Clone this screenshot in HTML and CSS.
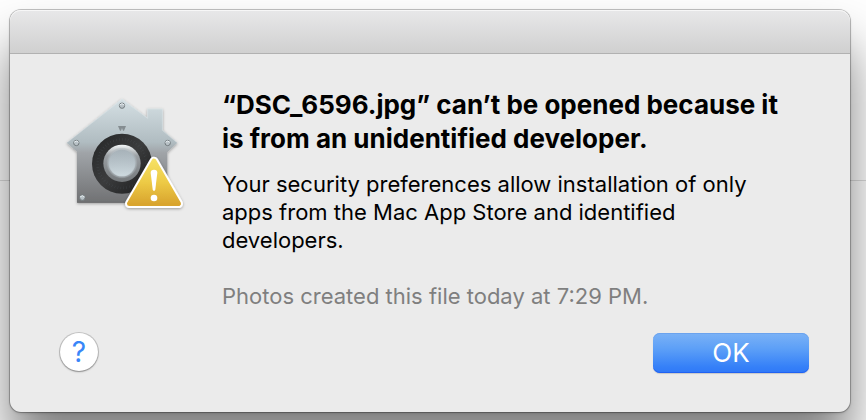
FILE: index.html
```html
<!DOCTYPE html>
<html lang="en">
<head>
<meta charset="utf-8">
<meta name="viewport" content="width=device-width, initial-scale=1">
<title>Unidentified developer</title>
<link rel="stylesheet" href="styles.css">
</head>
<body>
<main class="dialog" role="alertdialog" aria-labelledby="title" aria-describedby="message">
  <div class="titlebar"></div>
  <div class="content">
    <svg class="icon" viewBox="0 0 420 390" aria-hidden="true">
      <defs>
        <linearGradient id="metal" x1="0" y1="0" x2="0" y2="1">
          <stop offset="0" stop-color="#d5e0e4"/>
          <stop offset=".42" stop-color="#b0bcc1"/>
          <stop offset=".52" stop-color="#a0a4a8"/>
          <stop offset="1" stop-color="#707173"/>
        </linearGradient>
        <linearGradient id="rim" x1="0" y1="0" x2="0" y2="1">
          <stop offset="0" stop-color="#f4f7f8"/>
          <stop offset=".3" stop-color="#9a9fa3"/>
          <stop offset="1" stop-color="#74787b"/>
        </linearGradient>
        <radialGradient id="knob" cx=".5" cy=".5" r=".5">
          <stop offset="0" stop-color="#b9c4ca"/>
          <stop offset=".8" stop-color="#b7c2c8"/>
          <stop offset="1" stop-color="#a9b1b6" stop-opacity=".3"/>
        </radialGradient>
        <linearGradient id="sheen" x1="0" y1="0" x2="0" y2="1">
          <stop offset="0" stop-color="#98a3ab" stop-opacity=".5"/>
          <stop offset="1" stop-color="#d8e5ea" stop-opacity=".7"/>
        </linearGradient>
        <linearGradient id="dial" x1="0" y1="0" x2="1" y2="1">
          <stop offset="0" stop-color="#242526"/>
          <stop offset=".5" stop-color="#3b3c3d"/>
          <stop offset="1" stop-color="#191a1b"/>
        </linearGradient>
        <linearGradient id="yellow" x1="0" y1="0" x2="0" y2="1">
          <stop offset="0" stop-color="#f5e063"/>
          <stop offset=".5" stop-color="#edca45"/>
          <stop offset="1" stop-color="#d9a52f"/>
        </linearGradient>
        <filter id="shadow" x="-20%" y="-20%" width="140%" height="140%">
          <feDropShadow dx="0" dy="3" stdDeviation="4" flood-color="#000" flood-opacity=".35"/>
        </filter>
      </defs>
      <path filter="url(#shadow)" fill="url(#metal)" d="M201 38 277 95V68H323V132L367 170 337 199V350H66V197L35 170Z"/>
      <path fill="none" stroke="#e5edf0" stroke-width="2" opacity=".6" d="M37 169 201 40 278 97V69H322V133L365 169"/>
      <path fill="none" stroke="#595b5d" stroke-width="2" opacity=".7" d="M67 349H336"/>
      <path fill="#858d91" d="M189 120H213L207 134H204L201 126 198 134H195Z"/>
      <g fill="#b9c2c7" stroke="#747c80" stroke-width="3">
        <circle cx="201" cy="59" r="8"/>
        <circle cx="64" cy="171" r="8"/>
        <circle cx="338" cy="171" r="8"/>
        <circle cx="82" cy="335" r="8"/>
      </g>
      <g fill="none" stroke="#e7eef1" stroke-width="3">
        <path d="M194 57Q201 49 208 57M57 169Q64 161 71 169M331 169Q338 161 345 169M75 333Q82 325 89 333"/>
      </g>
      <circle cx="201" cy="233" r="90" fill="url(#dial)"/>
      <circle cx="201" cy="233" r="73" fill="none" stroke="#59636b" stroke-width="8" stroke-dasharray="1 8" opacity=".5"/>
      <circle cx="201" cy="232" r="56" fill="url(#rim)"/>
      <circle cx="201" cy="231" r="46" fill="url(#knob)"/>
      <circle cx="201" cy="231" r="40" fill="url(#sheen)"/>
      <g filter="url(#shadow)" stroke-linejoin="round">
        <path fill="#fff" stroke="#fff" stroke-width="26" d="M297 225 371 353H223Z"/>
        <path fill="url(#yellow)" stroke="url(#yellow)" stroke-width="14" d="M297 225 371 353H223Z"/>
      </g>
      <path fill="#fff" d="M287 260Q287 251 297 251T307 260L301 310Q300 315 297 315T293 310Z"/>
      <circle cx="297" cy="336" r="10" fill="#fff"/>
    </svg>
    <div class="text">
      <h1 id="title">“DSC_6596.jpg” can’t be opened because it is from an unidentified developer.</h1>
      <p id="message">Your security preferences allow installation of only apps from the Mac App Store and identified developers.</p>
      <p class="note">Photos created this file today at 7:29 PM.</p>
    </div>
  </div>
  <div class="actions">
    <button class="help" type="button" aria-label="Help">?</button>
    <button class="ok" type="button">OK</button>
  </div>
</main>
</body>
</html>
```
FILE: styles.css
```css
* {
  box-sizing: border-box;
}

body {
  margin: 0;
  min-height: 100vh;
  padding: 10px 16px 8px 10px;
  display: flex;
  overflow: hidden;
  font-family: Inter, "Liberation Sans", sans-serif;
  background: linear-gradient(#dcdcdc, #dcdcdc) 0 180px / 100% 1px no-repeat #fefefe;
}

.dialog {
  flex: 1;
  display: flex;
  flex-direction: column;
  border-radius: 11px;
  background: #ebebeb;
  box-shadow: 0 0 0 1px rgba(0, 0, 0, .22), 0 1px 3px rgba(0, 0, 0, .2), 0 36px 50px rgba(0, 0, 0, .5);
}

.titlebar {
  height: 44px;
  border-radius: 11px 11px 0 0;
  border-bottom: 1px solid #b1b1b1;
  background: linear-gradient(#e8e8e9, #d0d0d0);
  box-shadow: inset 0 1px #f7f7f7;
}

.content {
  flex: 1;
  display: flex;
  align-items: flex-start;
  gap: 27px;
  padding: 32px 56px 0 45px;
}

.icon {
  flex: none;
  width: 140px;
  height: 130px;
}

.text {
  flex: 1;
  max-width: 584px;
  padding-top: 2px;
  font-size: 22px;
  line-height: 28px;
  color: #000;
}

h1 {
  margin: 0 0 14px;
  font-size: 26px;
  font-weight: 700;
  line-height: 34px;
}

p {
  margin: 0;
}

.note {
  margin-top: 28px;
  color: #7f7f7f;
}

.actions {
  display: flex;
  align-items: flex-start;
  justify-content: space-between;
  padding: 0 41px 39px 50px;
}

button {
  padding: 0;
  border: 0;
  font-family: inherit;
}

.help {
  width: 38px;
  height: 38px;
  border-radius: 50%;
  background: #fff;
  color: #3986f8;
  font-size: 28px;
  line-height: 38px;
  box-shadow: 0 0 0 1px rgba(0, 0, 0, .16), 0 1px 2px rgba(0, 0, 0, .3);
}

.ok {
  width: 156px;
  height: 40px;
  border-radius: 7px;
  background: linear-gradient(#7bb2f6, #5c9ff7 40%, #3580f8 85%, #2f78f8);
  color: #fff;
  font-size: 26px;
  line-height: 40px;
  box-shadow: inset 0 1px #6ba3ee, inset 0 -1px #2062f2, 0 1px 1px rgba(0, 0, 0, .15);
}
```
